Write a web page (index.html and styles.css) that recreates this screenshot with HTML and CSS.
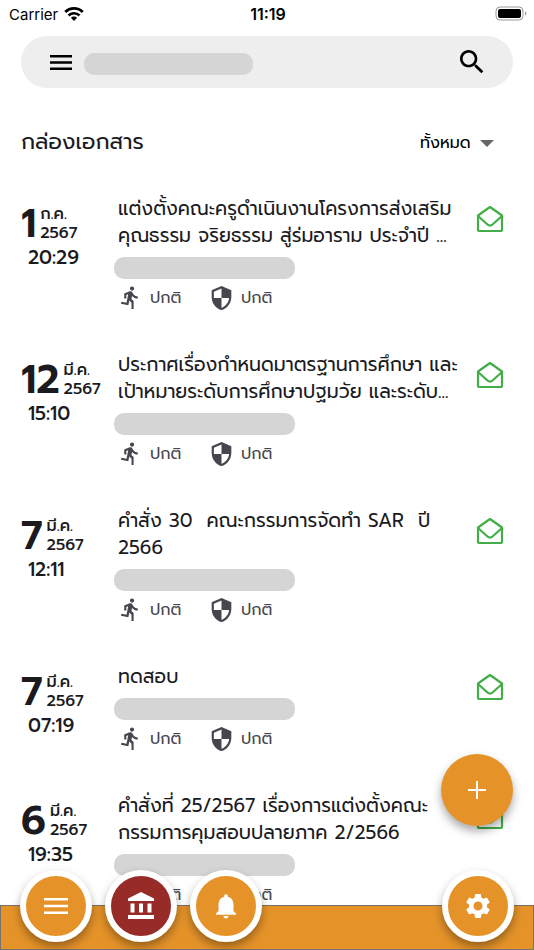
FILE: index.html
```html
<!DOCTYPE html>
<html lang="th">
<head>
  <meta charset="UTF-8" />
  <meta name="viewport" content="width=device-width, initial-scale=1.0" />
  <title>กล่องเอกสาร</title>
  <link rel="stylesheet" href="styles.css">
</head>
<body>
  <svg class="sprite" aria-hidden="true">
    <symbol id="run" viewBox="1 1 22 23"><path d="M13.49 5.48c1.1 0 2-.9 2-2s-.9-2-2-2-2 .9-2 2 .9 2 2 2zm-3.6 13.9l1-4.4 2.1 2v6h2v-7.500l-2.100-2 .6-3c1.300 1.500 3.300 2.500 5.500 2.500v-2c-1.900 0-3.500-1-4.300-2.400l-1-1.600c-.4-.6-1-1-1.700-1-.3 0-.5.1-.8.1l-5.200 2.200v4.700h2v-3.400l1.800-.7-1.600 8.100-4.900-1-.4 2 7 1.400z"/></symbol>
    <symbol id="shield" viewBox="2 1 20 22"><path d="M12 1L3 5v6c0 5.550 3.840 10.740 9 12 5.160-1.260 9-6.450 9-12V5l-9-4zm0 10.990h7c-.53 4.120-3.280 7.790-7 8.940V12H5V6.300l7-3.110v8.800z"/></symbol>
    <symbol id="mail" viewBox="0 0 28 28"><path d="M2 10.500L14 2l12 8.500V25a1 1 0 0 1-1 1H3a1 1 0 0 1-1-1zM2 11l9.500 8.500c1.600 1.400 3.400 1.400 5 0L26 11" fill="none" stroke="currentColor" stroke-width="2.200" stroke-linejoin="round"/></symbol>
  </svg>

  <header>
    <div class="status">
      <span class="carrier">Carrier
        <svg width="20" height="15" viewBox="0 0 20 15"><path d="M10 0C6.200 0 2.800 1.500.3 3.900l1.900 2A11.200 11.200 0 0 1 10 2.800c3 0 5.800 1.200 7.800 3.100l1.900-2A14 14 0 0 0 10 0zm0 4.900c-2.500 0-4.700 1-6.400 2.500l1.900 2A6.600 6.600 0 0 1 10 7.600c1.700 0 3.300.7 4.500 1.800l1.900-2A9.300 9.300 0 0 0 10 4.900zm0 4.700c-1.200 0-2.300.5-3.100 1.200L10 14l3.100-3.200A4.500 4.500 0 0 0 10 9.600z"/></svg>
      </span>
      <span class="clock">11:19</span>
      <svg class="battery" width="32" height="16" viewBox="0 0 32 16"><rect x="1" y="1" width="27" height="13" rx="4" fill="none" stroke="#999"/><rect x="3" y="3" width="23" height="9" rx="2"/><path d="M30 5.500v4c1.800-.5 1.800-3.500 0-4z" fill="#999"/></svg>
    </div>
    <div class="search">
      <button type="button" aria-label="เมนู"><svg width="22" height="15" viewBox="0 0 22 15"><path d="M0 0h22v2.400H0zM0 6.300h22v2.400H0zM0 12.600h22V15H0z"/></svg></button>
      <span class="redacted school"></span>
      <button type="button" aria-label="ค้นหา"><svg width="32" height="32" viewBox="0 0 24 24"><path d="M15.500 14h-.79l-.28-.27C15.410 12.590 16 11.110 16 9.500 16 5.910 13.090 3 9.500 3S3 5.910 3 9.500 5.910 16 9.500 16c1.610 0 3.090-.59 4.230-1.570l.27.28v.79l5 4.990L20.490 19l-4.990-5zm-6 0C7.010 14 5 11.990 5 9.500S7.010 5 9.500 5 14 7.010 14 9.500 11.990 14 9.500 14z"/></svg></button>
    </div>
  </header>

  <main>
    <div class="heading">
      <h1>กล่องเอกสาร</h1>
      <select aria-label="ตัวกรองเอกสาร">
        <option>ทั้งหมด</option>
      </select>
      <svg class="caret" width="14" height="7" viewBox="0 0 14 7"><path d="M0 0h14L7 7z"/></svg>
    </div>

    <article>
      <div class="date">
        <div class="day"><b>1</b><span>ก.ค.<br>2567</span></div>
        <div class="time">20:29</div>
      </div>
      <div class="doc">
        <h2>แต่งตั้งคณะครูดำเนินงานโครงการส่งเสริม<br>คุณธรรม จริยธรรม สู่ร่มอาราม ประจำปี ...</h2>
        <div class="redacted"></div>
        <div class="meta">
          <svg><use href="#run"/></svg><span>ปกติ</span>
          <svg><use href="#shield"/></svg><span>ปกติ</span>
        </div>
      </div>
      <svg class="mail"><use href="#mail"/></svg>
    </article>

    <article>
      <div class="date">
        <div class="day"><b>12</b><span>มี.ค.<br>2567</span></div>
        <div class="time">15:10</div>
      </div>
      <div class="doc">
        <h2>ประกาศเรื่องกำหนดมาตรฐานการศึกษา และ<br>เป้าหมายระดับการศึกษาปฐมวัย และระดับ...</h2>
        <div class="redacted"></div>
        <div class="meta">
          <svg><use href="#run"/></svg><span>ปกติ</span>
          <svg><use href="#shield"/></svg><span>ปกติ</span>
        </div>
      </div>
      <svg class="mail"><use href="#mail"/></svg>
    </article>

    <article>
      <div class="date">
        <div class="day"><b>7</b><span>มี.ค.<br>2567</span></div>
        <div class="time">12:11</div>
      </div>
      <div class="doc">
        <h2>คำสั่ง 30&nbsp; คณะกรรมการจัดทำ SAR&nbsp; ปี<br>2566</h2>
        <div class="redacted"></div>
        <div class="meta">
          <svg><use href="#run"/></svg><span>ปกติ</span>
          <svg><use href="#shield"/></svg><span>ปกติ</span>
        </div>
      </div>
      <svg class="mail"><use href="#mail"/></svg>
    </article>

    <article>
      <div class="date">
        <div class="day"><b>7</b><span>มี.ค.<br>2567</span></div>
        <div class="time">07:19</div>
      </div>
      <div class="doc">
        <h2>ทดสอบ</h2>
        <div class="redacted"></div>
        <div class="meta">
          <svg><use href="#run"/></svg><span>ปกติ</span>
          <svg><use href="#shield"/></svg><span>ปกติ</span>
        </div>
      </div>
      <svg class="mail"><use href="#mail"/></svg>
    </article>

    <article>
      <div class="date">
        <div class="day"><b>6</b><span>มี.ค.<br>2567</span></div>
        <div class="time">19:35</div>
      </div>
      <div class="doc">
        <h2>คำสั่งที่ 25/2567 เรื่องการแต่งตั้งคณะ<br>กรรมการคุมสอบปลายภาค 2/2566</h2>
        <div class="redacted"></div>
        <div class="meta">
          <svg><use href="#run"/></svg><span>ปกติ</span>
          <svg><use href="#shield"/></svg><span>ปกติ</span>
        </div>
      </div>
      <svg class="mail"><use href="#mail"/></svg>
    </article>
  </main>

  <button type="button" class="add" aria-label="เพิ่มเอกสาร"><svg width="18" height="18" viewBox="0 0 18 18"><path d="M8 0h2v8h8v2h-8v8H8v-8H0V8h8z"/></svg></button>

  <nav>
    <button type="button" aria-label="เมนูหลัก"><svg width="24" height="16" viewBox="0 0 24 16"><path d="M0 0h24v2.500H0zM0 6.800h24v2.500H0zM0 13.500h24V16H0z"/></svg></button>
    <button type="button" class="active" aria-label="สถานศึกษา"><svg width="26" height="27" viewBox="0 0 26 27"><path d="M13 0l13 6.500V9H0V6.500zM2.500 11.500h4v9h-4zM11 11.500h4v9h-4zM19.500 11.500h4v9h-4zM0 23h26v4H0z"/></svg></button>
    <button type="button" aria-label="การแจ้งเตือน"><svg width="30" height="30" viewBox="0 0 24 24"><path d="M12 22c1.100 0 2-.9 2-2h-4c0 1.100.89 2 2 2zm6-6v-5c0-3.070-1.640-5.640-4.500-6.320V4c0-.83-.67-1.500-1.500-1.500s-1.500.67-1.500 1.500v.68C7.630 5.360 6 7.920 6 11v5l-2 2v1h16v-1l-2-2z"/></svg></button>
    <button type="button" class="settings" aria-label="ตั้งค่า"><svg width="30" height="30" viewBox="0 0 24 24"><path d="M19.140 12.940c.04-.3.060-.61.060-.94 0-.32-.02-.64-.07-.94l2.030-1.580c.18-.14.23-.41.120-.61l-1.920-3.320c-.12-.22-.37-.29-.59-.22l-2.390.96c-.5-.38-1.030-.7-1.620-.94l-.36-2.540c-.04-.24-.24-.41-.48-.41h-3.840c-.24 0-.43.17-.47.41l-.36 2.540c-.59.24-1.130.57-1.620.94l-2.390-.96c-.22-.08-.47 0-.59.22L2.740 8.870c-.12.21-.08.47.12.61l2.030 1.580c-.05.3-.09.63-.09.94s.02.64.07.94l-2.030 1.580c-.18.14-.23.41-.12.61l1.920 3.320c.12.22.37.29.59.22l2.390-.96c.5.38 1.030.7 1.620.94l.36 2.540c.05.24.24.41.48.41h3.840c.24 0 .44-.17.47-.41l.36-2.540c.59-.24 1.130-.56 1.620-.94l2.390.96c.22.08.47 0 .59-.22l1.920-3.320c.12-.22.070-.47-.12-.61l-2.010-1.580zM12 15.600a3.600 3.600 0 1 1 0-7.200 3.600 3.600 0 0 1 0 7.200z"/></svg></button>
  </nav>
</body>
</html>
```
FILE: styles.css
```css
* {
  box-sizing: border-box;
}
body {
  margin: 0;
  height: 100vh;
  overflow: hidden;
  background: #fff;
  color: #1b1b1f;
  font-family: Prompt, Kanit, "Noto Sans Thai", "Noto Sans", sans-serif;
}
button {
  border: 0;
  padding: 0;
  background: none;
  display: flex;
  align-items: center;
  justify-content: center;
}
.sprite {
  display: none;
}
.status {
  height: 28px;
  padding: 0 7px 0 9px;
  display: grid;
  grid-template-columns: 1fr auto 1fr;
  align-items: center;
  color: #000;
  font: 16px Inter, sans-serif;
}
.carrier {
  display: flex;
  align-items: center;
  gap: 6px;
  font-size: 15px;
}
.clock {
  font-weight: 600;
}
.battery {
  justify-self: end;
}
.search {
  height: 52px;
  margin: 8px 21px 0;
  padding: 0 25px 0 29px;
  border-radius: 26px;
  background: #eee;
  display: flex;
  align-items: center;
}
.redacted {
  width: 181px;
  height: 22px;
  border-radius: 10px;
  background: #d5d5d5;
}
.school {
  width: 169px;
  margin: 3px auto 0 12px;
}
.heading {
  height: 107px;
  padding: 0 40px 0 21px;
  display: flex;
  align-items: center;
}
h1 {
  margin: 0 auto 0 0;
  font-size: 22px;
  font-weight: 400;
}
select {
  appearance: none;
  border: 0;
  padding: 3px 0 0;
  background: none;
  color: #000;
  font: inherit;
  font-size: 16px;
}
.caret {
  margin: 3px 0 0 9px;
  fill: #666;
}
article {
  padding: 0 30px 41px 21px;
  display: flex;
}
.date {
  width: 93px;
  flex: none;
  padding-top: 9px;
  font-weight: 500;
}
.day {
  height: 40px;
  display: flex;
  align-items: center;
  gap: 4px;
  font-size: 16px;
  line-height: 19px;
}
.day b {
  font-size: 40px;
  line-height: 42px;
  font-weight: 600;
}
.time {
  padding-left: 7px;
  font-size: 19px;
  line-height: 28px;
}
.doc {
  flex: 1;
  min-width: 0;
}
h2 {
  margin: 0 0 8px 4px;
  font-size: 19px;
  line-height: 27px;
  font-weight: 400;
  white-space: nowrap;
}
.meta {
  height: 24px;
  margin-top: 7px;
  padding-left: 4px;
  display: flex;
  align-items: center;
  color: #46464f;
  font-size: 16px;
  font-weight: 400;
}
.meta svg {
  width: 25px;
  height: 24px;
  fill: #46464f;
}
.meta span {
  width: 32px;
  margin: 0 27px 0 7px;
}
.mail {
  flex: none;
  width: 28px;
  height: 28px;
  margin-top: 10px;
  color: #43ae48;
}
.add {
  position: fixed;
  right: 21px;
  bottom: 124px;
  width: 72px;
  height: 72px;
  border-radius: 50%;
  background: #e59329;
  fill: #fff;
  box-shadow: 0 5px 10px rgba(0, 0, 0, 0.35);
}
nav {
  position: fixed;
  left: 0;
  right: 0;
  bottom: 0;
  height: 45px;
  padding: 0 19px;
  border: 1px solid #77736c;
  background: #e59329;
  display: flex;
  align-items: center;
  gap: 13px;
}
nav button {
  flex: none;
  width: 72px;
  height: 72px;
  margin-bottom: 44px;
  border: 6px solid #fff;
  border-radius: 50%;
  background: #e59329;
  fill: #fff;
  box-shadow: 0 5px 10px rgba(0, 0, 0, 0.35);
}
nav .active {
  background: #962b27;
}
nav .settings {
  margin-left: auto;
}
```
